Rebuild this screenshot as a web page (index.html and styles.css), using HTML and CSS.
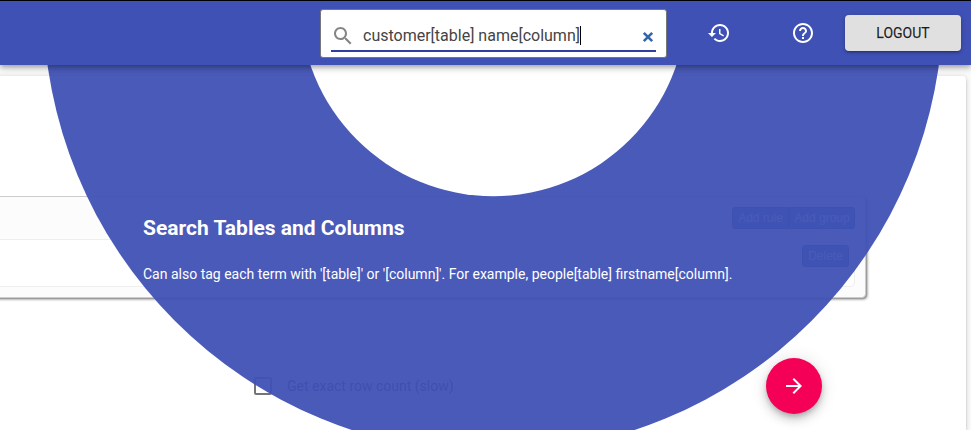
FILE: index.html
```
<!DOCTYPE html>
<html lang="en">
<head>
<meta charset="utf-8">
<title>Search</title>
<link rel="stylesheet" href="styles.css">
</head>
<body>
<header class="appbar">
  <div class="search">
    <div class="field">
      <svg class="search-icon" viewBox="0 0 24 24"><path d="M15.5 14h-.79l-.28-.27C15.41 12.59 16 11.11 16 9.5 16 5.91 13.09 3 9.5 3S3 5.91 3 9.5 5.91 16 9.5 16c1.61 0 3.09-.59 4.23-1.57l.27.28v.79l5 4.99L20.49 19l-4.99-5zm-6 0C7.01 14 5 11.99 5 9.5S7.01 5 9.5 5 14 7.01 14 9.5 11.99 14 9.5 14z"/></svg>
      <span class="query">customer[table] name[column]</span><span class="caret"></span>
      <svg class="clear" viewBox="0 0 12 12"><path d="M1.8 1.8l8.4 8.4M10.2 1.8l-8.4 8.4"/></svg>
    </div>
  </div>
  <svg class="icon history" viewBox="0 0 24 24"><path d="M13 3c-4.97 0-9 4.03-9 9H1l3.89 3.89.07.14L9 12H6c0-3.87 3.13-7 7-7s7 3.13 7 7-3.13 7-7 7c-1.93 0-3.68-.79-4.94-2.06l-1.42 1.42C8.27 19.99 10.51 21 13 21c4.97 0 9-4.03 9-9s-4.03-9-9-9zm-1 5v5l4.28 2.54.72-1.21-3.5-2.08V8H12z"/></svg>
  <svg class="icon help" viewBox="0 0 24 24"><path d="M11 18h2v-2h-2v2zm1-16C6.48 2 2 6.48 2 12s4.48 10 10 10 10-4.48 10-10S17.52 2 12 2zm0 18c-4.41 0-8-3.59-8-8s3.59-8 8-8 8 3.59 8 8-3.59 8-8 8zm0-14c-2.21 0-4 1.79-4 4h2c0-1.1.9-2 2-2s2 .9 2 2c0 2-3 1.75-3 5h2c0-2.25 3-2.5 3-5 0-2.21-1.79-4-4-4z"/></svg>
  <button class="logout">LOGOUT</button>
</header>
<main class="paper">
  <section class="group">
    <div class="actions"><button class="mini">Add rule</button><button class="mini">Add group</button></div>
    <div class="rule"><button class="mini">Delete</button></div>
  </section>
  <div class="option"><span class="checkbox"></span><span class="option-label">Get exact row count (slow)</span></div>
</main>
<aside class="discovery">
  <svg class="ring" viewBox="0 0 971 430">
    <circle class="ring-outer" cx="493.2" cy="2.8" r="450"/>
    <circle class="ring-inner" cx="493.4" cy="3" r="193.2"/>
  </svg>
  <div class="discovery-text">
    <h2>Search Tables and Columns</h2>
    <p>Can also tag each term with '[table]' or '[column]'. For example, people[table] firstname[column].</p>
  </div>
</aside>
<button class="fab" aria-label="Next"><svg viewBox="0 0 24 24"><path d="M12 4l-1.41 1.41L16.17 11H4v2h12.17l-5.58 5.59L12 20l8-8z"/></svg></button>
</body>
</html>
```
FILE: styles.css
```
* { box-sizing: border-box; }
html, body { height: 100%; }
body {
  margin: 0;
  position: relative;
  overflow: hidden;
  background: #fafafa;
  font-family: Roboto, sans-serif;
}
button { border: 0; padding: 0; font-family: inherit; }

.appbar {
  position: relative;
  z-index: 3;
  display: flex;
  align-items: flex-start;
  height: 65px;
  padding: 8px 10px 0 320px;
  border-top: 1px solid #000;
  background: #3f51b5;
  box-shadow: 0 2px 4px -1px rgba(0,0,0,.2), 0 4px 5px rgba(0,0,0,.14), 0 1px 10px rgba(0,0,0,.12);
}
.search {
  width: 347px;
  height: 49px;
  padding: 4px 10px 0;
  border: 1px solid #777;
  border-radius: 3px;
  background: #fff;
}
.field {
  display: flex;
  align-items: center;
  height: 38px;
  padding-top: 7px;
  border-bottom: 2px solid #303f9f;
}
.search-icon { width: 24px; height: 24px; fill: #858585; flex: none; }
.query {
  margin-left: 8px;
  color: #444;
  font-size: 16px;
  line-height: 20px;
  white-space: nowrap;
}
.caret { width: 1px; height: 19px; background: #000; }
.clear {
  width: 12px;
  height: 12px;
  margin: 2px 2.5px 0 auto;
  fill: none;
  stroke: #3565ab;
  stroke-width: 2.6;
}
.icon { width: 24px; height: 24px; margin-top: 12px; fill: #fff; }
.history { margin-left: 40px; }
.help { margin-left: 60px; }
.logout {
  width: 116px;
  height: 36px;
  margin: 6px 0 0 auto;
  border-radius: 4px;
  background: #e0e0e0;
  color: rgba(0,0,0,.87);
  font-size: 14px;
  font-weight: 400;
  -webkit-text-stroke: .25px rgba(0,0,0,.6);
  box-shadow: 0 1px 5px rgba(0,0,0,.2), 0 2px 2px rgba(0,0,0,.14), 0 3px 1px -2px rgba(0,0,0,.12);
}

.paper {
  height: 354px;
  margin: 11px 5px 0 -20px;
  padding-top: 120px;
  background: #fff;
  border-top-right-radius: 4px;
  box-shadow: 0 1px 5px rgba(0,0,0,.2), 0 2px 2px rgba(0,0,0,.14), 0 3px 1px -2px rgba(0,0,0,.12);
}
.group {
  width: 886px;
  height: 102px;
  padding: 10px 10px 0;
  border: 1px solid #ccc;
  border-radius: 4px;
  background: #fcfcfc;
  box-shadow: 1px 1px 3px rgba(0,0,0,.6);
  clip-path: inset(0 -6px -6px 0);
}
.actions { display: flex; justify-content: flex-end; height: 32px; }
.mini {
  height: 22px;
  padding: 0;
  border: 1px solid #204d74;
  border-radius: 3px;
  background: #337a9a;
  color: #fff;
  font: 12px "Liberation Sans", sans-serif;
  white-space: nowrap;
}
.actions .mini:first-child { width: 57px; border-radius: 3px 0 0 3px; }
.actions .mini:last-child { width: 66px; border-radius: 0 3px 3px 0; }
.rule {
  display: flex;
  justify-content: flex-end;
  height: 48px;
  padding: 5px 5px 0;
  border: 1px solid #eee;
  border-radius: 5px;
  background: #fff;
}
.rule .mini { width: 47px; }
.option { display: flex; align-items: center; height: 24px; margin: 76px 0 0 274px; }
.checkbox { width: 18px; height: 18px; border: 2px solid #757575; border-radius: 2px; }
.option-label { margin-left: 15px; font-size: 14px; color: rgba(0,0,0,.87); }

/* Overlay ring centred on the search field */
.discovery {
  position: absolute;
  z-index: 2;
  inset: 0;
  overflow: hidden;
  color: #fff;
}
.ring { position: absolute; left: 0; top: 0; width: 971px; height: 430px; }
.ring-outer { fill: rgba(63,81,181,.95); }
.ring-inner { fill: #fff; }
.discovery-text { position: relative; padding: 214px 0 0 143px; white-space: nowrap; }
.discovery-text h2 { margin: 0; font-size: 21px; font-weight: 700; line-height: 28px; }
.discovery-text p { margin: 22px 0 0; font-size: 14px; line-height: 20px; }
.fab {
  position: absolute;
  z-index: 4;
  left: 766px;
  top: 358px;
  display: grid;
  place-items: center;
  width: 56px;
  height: 56px;
  border-radius: 50%;
  background: #f50057;
  box-shadow: 0 3px 5px -1px rgba(0,0,0,.2), 0 6px 10px rgba(0,0,0,.14), 0 1px 18px rgba(0,0,0,.12);
}
.fab svg { width: 24px; height: 24px; fill: #fff; }
```
